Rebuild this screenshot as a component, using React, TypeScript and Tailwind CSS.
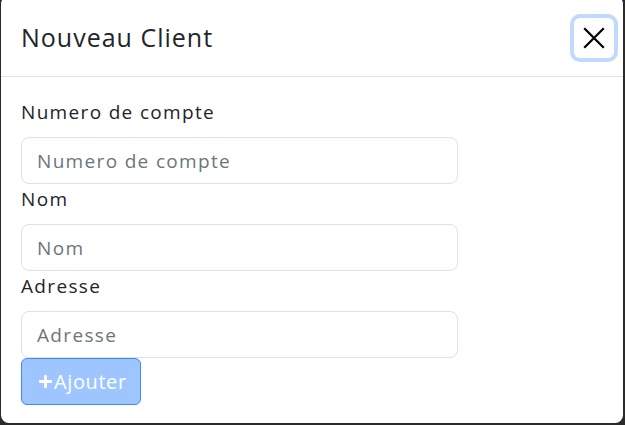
import React from 'react';
import { FaPlus } from 'react-icons/fa';

const font = { fontFamily: '"Open Sans", "Inter", sans-serif' };

const Field: React.FC<{ label: string }> = ({ label }) => (
  <div>
    <label className="block text-[19px] leading-[31px] mb-[9px] tracking-[0.07em] text-[#212529]">{label}</label>
    <input
      placeholder={label}
      className="block w-[437px] h-[47px] px-[15px] text-[19px] tracking-[0.07em] rounded-lg border border-[#dee2e6] bg-white text-[#212529] placeholder:text-[#6c757d] outline-none"
    />
  </div>
);

export default function App() {
  return (
    <div className="w-[625px] h-[425px] bg-[#2b2b2b] overflow-hidden pl-[1px]" style={font}>
      <div className="w-[622px] h-[427px] -mt-[4px] bg-white rounded-lg">
        <div className="h-[81px] pt-[2px] flex items-center justify-between pl-[20px] pr-[9px] border-b border-[#dee2e6]">
          <h5 className="text-[25px] leading-9 tracking-[0.04em] text-[#212529]">Nouveau Client</h5>
          <button className="w-[40px] h-[40px] mt-[2px] flex items-center justify-center rounded-md ring-4 ring-[#c2d9fe] text-black">
            <svg width="22" height="22" viewBox="0 0 22 22" fill="none" stroke="currentColor" strokeWidth="2.2" strokeLinecap="square">
              <path d="M2 2 L20 20 M20 2 L2 20" />
            </svg>
          </button>
        </div>
        <div className="pt-[20px] px-[20px]">
          <Field label="Numero de compte" />
          <Field label="Nom" />
          <Field label="Adresse" />
          <button className="flex items-center gap-[1px] h-[47px] w-[120px] pl-[16px] rounded-md bg-[#9ec5fe] border border-[#3d8bfd] text-white text-[20px] tracking-[0.03em]">
            <FaPlus className="w-[15px] h-[15px]" />
            <span>Ajouter</span>
          </button>
        </div>
      </div>
    </div>
  );
}
